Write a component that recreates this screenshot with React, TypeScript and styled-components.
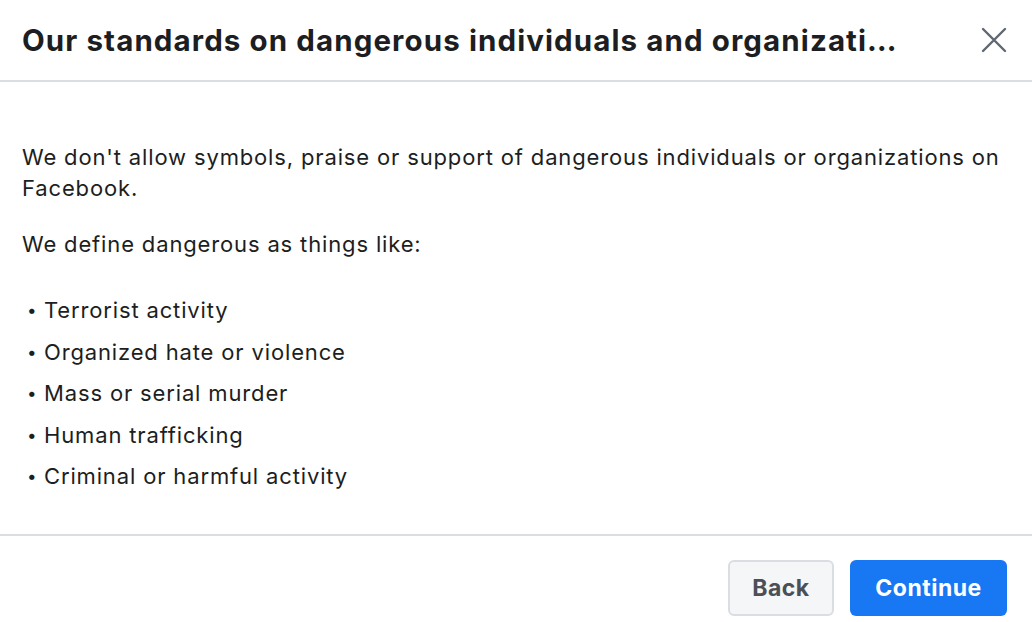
import styled, { createGlobalStyle } from "styled-components";

const GlobalStyle = createGlobalStyle`
	html, body {
		margin: 0;
		padding: 0;
		background: #ffffff;
	}
	body {
		font-family: Inter, "Noto Sans", sans-serif;
		color: #1c1e21;
	}
`;

const Dialog = styled.div`
	width: 1032px;
	height: 622px;
	display: flex;
	flex-direction: column;
	overflow: hidden;
`;

const Header = styled.header`
	height: 82px;
	display: flex;
	align-items: center;
	justify-content: space-between;
	padding: 0 18px 0 22px;
	border-bottom: 2px solid #dadde1;
	box-sizing: border-box;
`;

const Title = styled.h1`
	margin: 0;
	font-size: 29.5px;
	font-weight: 700;
	letter-spacing: 1.1px;
	white-space: nowrap;
	overflow: hidden;
	text-overflow: ellipsis;
	max-width: 884px;
`;

const CloseButton = styled.button`
	width: 40px;
	height: 40px;
	border: none;
	background: transparent;
	padding: 0;
	display: flex;
	align-items: center;
	justify-content: center;
	cursor: pointer;
`;

const Body = styled.main`
	flex: 1;
	padding: 60px 22px 0 22px;
	font-size: 22px;
	line-height: 31px;
	letter-spacing: 0.85px;
	border-bottom: 2px solid #dadde1;
`;

const Paragraph = styled.p`
	margin: 0 0 25px 0;
`;

const BulletList = styled.ul`
	list-style: none;
	margin: 30px 0 0 0;
	padding: 0;
`;

const Bullet = styled.li`
	display: flex;
	align-items: center;
	height: 41.5px;

	&::before {
		content: "•";
		font-size: 17px;
		width: 22px;
		padding-left: 5px;
		box-sizing: border-box;
	}
`;

const Footer = styled.footer`
	height: 86px;
	display: flex;
	justify-content: flex-end;
	align-items: flex-start;
	gap: 16px;
	padding: 24px 25px 0 0;
	box-sizing: border-box;
`;

const Button = styled.button<{ $primary?: boolean }>`
	height: 56px;
	padding: 0;
	border-radius: 6px;
	font-family: Inter, "Noto Sans", sans-serif;
	font-size: 23px;
	font-weight: 700;
	letter-spacing: 0.5px;
	cursor: pointer;
	background: ${(p) => (p.$primary ? "#1877f2" : "#f5f6f7")};
	color: ${(p) => (p.$primary ? "#ffffff" : "#4b4f56")};
	border: ${(p) => (p.$primary ? "none" : "2px solid #dadde1")};
	width: ${(p) => (p.$primary ? "157px" : "106px")};
`;

const items = [
	"Terrorist activity",
	"Organized hate or violence",
	"Mass or serial murder",
	"Human trafficking",
	"Criminal or harmful activity",
];

function App() {
	return (
		<Dialog>
			<GlobalStyle />
			<Header>
				<Title>Our standards on dangerous individuals and organizations</Title>
				<CloseButton aria-label="Close">
					<svg width="26" height="26" viewBox="0 0 26 26">
						<path
							d="M2 2 L24 24 M24 2 L2 24"
							stroke="#606770"
							strokeWidth="2.4"
							strokeLinecap="round"
						/>
					</svg>
				</CloseButton>
			</Header>
			<Body>
				<Paragraph>
					We don't allow symbols, praise or support of dangerous individuals or
					organizations on Facebook.
				</Paragraph>
				<Paragraph>We define dangerous as things like:</Paragraph>
				<BulletList>
					{items.map((item) => (
						<Bullet key={item}>{item}</Bullet>
					))}
				</BulletList>
			</Body>
			<Footer>
				<Button>Back</Button>
				<Button $primary>Continue</Button>
			</Footer>
		</Dialog>
	);
}

export default App;
